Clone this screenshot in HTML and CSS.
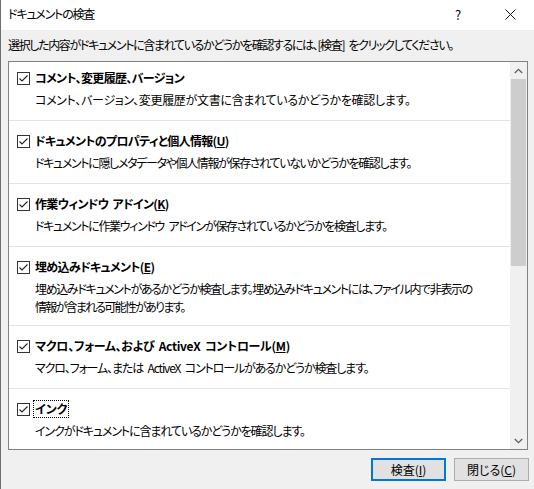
FILE: index.html
```html
<!DOCTYPE html>
<html lang="ja">
<head>
<meta charset="utf-8">
<title>ドキュメントの検査</title>
<link rel="stylesheet" href="styles.css">
</head>
<body>
<div class="window">
  <div class="titlebar">
    <span class="title">ドキュメントの検査</span>
    <span class="tb-help">?</span>
    <span class="tb-close">
      <svg width="11" height="11" viewBox="0 0 11 11"><path d="M0.5 0.5 L10.5 10.5 M10.5 0.5 L0.5 10.5" stroke="#111" stroke-width="1" fill="none"/></svg>
    </span>
  </div>
  <div class="content">
    <div class="instruction">選択した内容がドキュメントに含まれているかどうかを確認するには、[検査] をクリックしてください。</div>
    <div class="listbox">
      <div class="items">
        <div class="item first">
          <div class="item-head"><span class="cb"><svg width="13" height="13" viewBox="0 0 13 13"><rect x="0.5" y="0.5" width="12" height="12" fill="#fff" stroke="#333"/><path d="M2.5 6.5 L5 9 L10.5 3.5" stroke="#222" stroke-width="1.1" fill="none"/></svg></span><span class="item-title">コメント、変更履歴、バージョン</span></div>
          <div class="item-desc commas">コメント、バージョン、変更履歴が文書に含まれているかどうかを確認します。</div>
        </div>
        <div class="item">
          <div class="item-head"><span class="cb"><svg width="13" height="13" viewBox="0 0 13 13"><rect x="0.5" y="0.5" width="12" height="12" fill="#fff" stroke="#333"/><path d="M2.5 6.5 L5 9 L10.5 3.5" stroke="#222" stroke-width="1.1" fill="none"/></svg></span><span class="item-title">ドキュメントのプロパティと個人情報(<u>U</u>)</span></div>
          <div class="item-desc">ドキュメントに隠しメタデータや個人情報が保存されていないかどうかを確認します。</div>
        </div>
        <div class="item">
          <div class="item-head"><span class="cb"><svg width="13" height="13" viewBox="0 0 13 13"><rect x="0.5" y="0.5" width="12" height="12" fill="#fff" stroke="#333"/><path d="M2.5 6.5 L5 9 L10.5 3.5" stroke="#222" stroke-width="1.1" fill="none"/></svg></span><span class="item-title">作業ウィンドウ アドイン(<u>K</u>)</span></div>
          <div class="item-desc">ドキュメントに作業ウィンドウ アドインが保存されているかどうかを検査します。</div>
        </div>
        <div class="item two">
          <div class="item-head"><span class="cb"><svg width="13" height="13" viewBox="0 0 13 13"><rect x="0.5" y="0.5" width="12" height="12" fill="#fff" stroke="#333"/><path d="M2.5 6.5 L5 9 L10.5 3.5" stroke="#222" stroke-width="1.1" fill="none"/></svg></span><span class="item-title">埋め込みドキュメント(<u>E</u>)</span></div>
          <div class="item-desc">埋め込みドキュメントがあるかどうか検査します。埋め込みドキュメントには、ファイル内で非表示の<br><span class="tight">情報が含まれる可能性があります。</span></div>
        </div>
        <div class="item">
          <div class="item-head"><span class="cb"><svg width="13" height="13" viewBox="0 0 13 13"><rect x="0.5" y="0.5" width="12" height="12" fill="#fff" stroke="#333"/><path d="M2.5 6.5 L5 9 L10.5 3.5" stroke="#222" stroke-width="1.1" fill="none"/></svg></span><span class="item-title latin">マクロ、フォーム、および ActiveX コントロール(<u>M</u>)</span></div>
          <div class="item-desc latin">マクロ、フォーム、または ActiveX コントロールがあるかどうか検査します。</div>
        </div>
        <div class="item last">
          <div class="item-head"><span class="cb"><svg width="13" height="13" viewBox="0 0 13 13"><rect x="0.5" y="0.5" width="12" height="12" fill="#fff" stroke="#333"/><path d="M2.5 6.5 L5 9 L10.5 3.5" stroke="#222" stroke-width="1.1" fill="none"/></svg></span><span class="item-title focus">インク</span></div>
          <div class="item-desc short">インクがドキュメントに含まれているかどうかを確認します。</div>
        </div>
      </div>
      <div class="scrollbar">
        <div class="sb-btn"><svg width="9" height="6" viewBox="0 0 9 6"><path d="M0.8 5 L4.5 1.3 L8.2 5" stroke="#606060" stroke-width="1.3" fill="none"/></svg></div>
        <div class="sb-track"><div class="sb-thumb"></div></div>
        <div class="sb-btn"><svg width="9" height="6" viewBox="0 0 9 6"><path d="M0.8 1 L4.5 4.7 L8.2 1" stroke="#606060" stroke-width="1.3" fill="none"/></svg></div>
      </div>
    </div>
    <div class="buttons">
      <div class="btn default">検査(<u>I</u>)</div>
      <div class="btn">閉じる(<u>C</u>)</div>
    </div>
  </div>
</div>
</body>
</html>
```

FILE: styles.css
```css
html, body {
  margin: 0;
  padding: 0;
}
body {
  font-family: "Noto Sans CJK JP", "Noto Sans", sans-serif;
  font-size: 12px;
  font-feature-settings: "palt";
  color: #000;
  background: #f0f0f0;
}
.window {
  width: 534px;
  height: 489px;
  box-sizing: border-box;
  border-left: 1px solid #6f6f6f;
  display: flex;
  flex-direction: column;
  background: #f0f0f0;
  overflow: hidden;
}
.titlebar {
  height: 30px;
  flex: none;
  background: #fff;
  display: flex;
  align-items: center;
  padding-left: 7px;
}
.title {
  flex: 1;
  line-height: 16px;
  margin-top: -2px;
  letter-spacing: -1.2px;
}
.tb-help {
  width: 40px;
  text-align: center;
  font-size: 13px;
  margin-right: 8px;
  margin-top: -2px;
}
.tb-close {
  width: 48px;
  display: flex;
  justify-content: center;
  margin-top: -2px;
}
.content {
  flex: 1;
  display: flex;
  flex-direction: column;
  padding: 6px 5px 0 7px;
}
.instruction {
  line-height: 18px;
  margin-bottom: 7px;
  white-space: nowrap;
  letter-spacing: -1.35px;
  word-spacing: 3px;
}
.listbox {
  height: 389px;
  box-sizing: border-box;
  border: 1px solid #828282;
  background: #fff;
  display: flex;
  margin-right: 1px;
}
.items {
  flex: 1;
  overflow: hidden;
}
.item {
  padding: 12px 8px 11px 8px;
  border-bottom: 1px solid #e3e3e3;
}
.item.first {
  padding-top: 8px;
}
.item.two {
  padding-bottom: 9px;
}
.item.last {
  border-bottom: none;
}
.item-head {
  display: flex;
  align-items: center;
  height: 16px;
}
.cb {
  width: 13px;
  height: 13px;
  margin-right: 5px;
  display: flex;
}
.item-title {
  font-weight: 700;
  line-height: 16px;
  white-space: nowrap;
  letter-spacing: -0.65px;
  word-spacing: 2px;
}
.item-title.latin {
  letter-spacing: -0.3px;
}
.item-title.focus {
  outline: 1px dotted #000;
  outline-offset: 0;
  padding: 0 1px;
  margin-left: -1px;
  letter-spacing: 0;
}
.item-desc {
  margin-top: 5px;
  padding-left: 18px;
  line-height: 18px;
  white-space: nowrap;
  letter-spacing: -1.35px;
  word-spacing: 3px;
}
.item-desc.commas {
  letter-spacing: -0.3px;
}
.item-desc.latin {
  letter-spacing: -1.15px;
}
.item-desc.short {
  letter-spacing: -1.1px;
}
.tight {
  letter-spacing: -1.75px;
}
.scrollbar {
  width: 17px;
  flex: none;
  background: #f0f0f0;
  display: flex;
  flex-direction: column;
}
.sb-btn {
  height: 17px;
  display: flex;
  align-items: center;
  justify-content: center;
  flex: none;
}
.sb-track {
  flex: 1;
  padding: 0 1px;
}
.sb-thumb {
  height: 187px;
  background: #cdcdcd;
}
.buttons {
  display: flex;
  justify-content: flex-end;
  gap: 8px;
  margin-top: 8px;
}
.btn {
  width: 75px;
  height: 23px;
  box-sizing: border-box;
  border: 1px solid #adadad;
  background: #e1e1e1;
  display: flex;
  align-items: center;
  justify-content: center;
  line-height: 16px;
}
.btn.default {
  border: 2px solid #0078d7;
}
```
